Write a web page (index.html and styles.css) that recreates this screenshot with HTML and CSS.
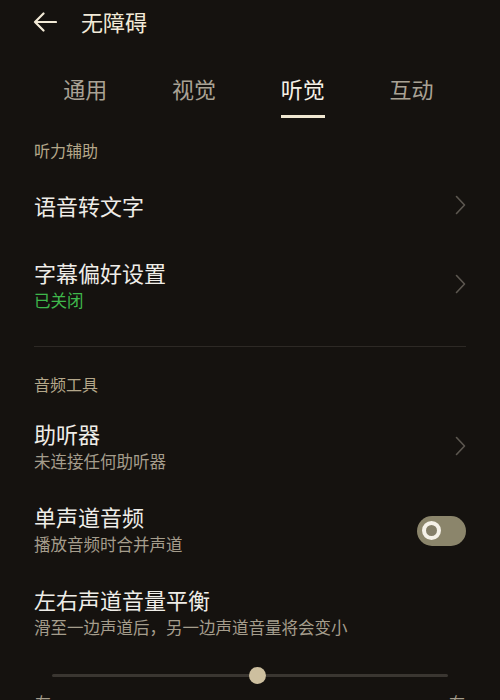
FILE: index.html
```html
<!DOCTYPE html>
<html lang="zh-CN">
<head>
<meta charset="utf-8">
<title>无障碍</title>
<link rel="stylesheet" href="styles.css">
</head>
<body>
<div class="screen">
  <header class="topbar">
    <svg class="back" width="24" height="20" viewBox="0 0 24 20">
      <path d="M23 10 H2 M10.5 1.5 L2 10 L10.5 18.5" fill="none" stroke="#f1e9d6" stroke-width="2.2" stroke-linecap="round" stroke-linejoin="round"/>
    </svg>
    <span class="page-title">无障碍</span>
  </header>

  <nav class="tabs">
    <div class="tab"><span class="tab-label">通用</span></div>
    <div class="tab"><span class="tab-label">视觉</span></div>
    <div class="tab active"><span class="tab-label">听觉</span></div>
    <div class="tab"><span class="tab-label">互动</span></div>
  </nav>

  <section class="group">
    <div class="group-title">听力辅助</div>
    <div class="row single">
      <div class="row-text"><div class="row-title">语音转文字</div></div>
      <svg class="chev" width="11" height="20" viewBox="0 0 11 20"><path d="M1.5 1.5 L9.5 10 L1.5 18.5" fill="none" stroke="#5c5750" stroke-width="1.6" stroke-linecap="round" stroke-linejoin="round"/></svg>
    </div>
    <div class="row">
      <div class="row-text">
        <div class="row-title">字幕偏好设置</div>
        <div class="row-sub green">已关闭</div>
      </div>
      <svg class="chev" width="11" height="20" viewBox="0 0 11 20"><path d="M1.5 1.5 L9.5 10 L1.5 18.5" fill="none" stroke="#5c5750" stroke-width="1.6" stroke-linecap="round" stroke-linejoin="round"/></svg>
    </div>
  </section>

  <div class="divider"></div>

  <section class="group">
    <div class="group-title">音频工具</div>
    <div class="row">
      <div class="row-text">
        <div class="row-title">助听器</div>
        <div class="row-sub">未连接任何助听器</div>
      </div>
      <svg class="chev" width="11" height="20" viewBox="0 0 11 20"><path d="M1.5 1.5 L9.5 10 L1.5 18.5" fill="none" stroke="#5c5750" stroke-width="1.6" stroke-linecap="round" stroke-linejoin="round"/></svg>
    </div>
    <div class="row">
      <div class="row-text">
        <div class="row-title">单声道音频</div>
        <div class="row-sub">播放音频时合并声道</div>
      </div>
      <div class="switch"><div class="knob"></div></div>
    </div>
    <div class="row">
      <div class="row-text">
        <div class="row-title">左右声道音量平衡</div>
        <div class="row-sub">滑至一边声道后，另一边声道音量将会变小</div>
      </div>
    </div>
    <div class="slider">
      <div class="track"></div>
      <div class="thumb" style="left: 52%;"></div>
    </div>
    <div class="slider-labels">
      <span>左</span>
      <span>右</span>
    </div>
  </section>
</div>
</body>
</html>
```

FILE: styles.css
```css
* { box-sizing: border-box; }

html, body {
  margin: 0;
  padding: 0;
  background: #15120f;
}

body {
  font-family: "Noto Sans CJK SC", "Noto Sans", sans-serif;
  color: #eeece6;
}

.screen {
  width: 500px;
  height: 700px;
  overflow: hidden;
  background: #15120f;
}

.topbar {
  height: 46px;
  display: flex;
  align-items: center;
  padding: 0 0 4px 33px;
}

.back {
  display: block;
  flex: none;
  margin-top: 2px;
}

.page-title {
  margin-left: 24px;
  font-size: 22px;
  line-height: 30px;
  color: #f2ead8;
}

.tabs {
  display: flex;
  margin-top: 27px;
  padding: 0 34px 0 31px;
}

.tab {
  flex: 1;
  display: flex;
  justify-content: center;
}

.tab-label {
  font-size: 22px;
  line-height: 30px;
  color: #a9a295;
  padding-bottom: 12px;
  border-bottom: 3px solid transparent;
}

.tab.active .tab-label {
  color: #f5f1e7;
  border-bottom-color: #efe6d0;
}

.group {
  padding: 0 34px;
}

.group-title {
  font-size: 16px;
  line-height: 22px;
  color: #b4a78a;
  margin-top: 21px;
  margin-bottom: 9.5px;
}

.row {
  display: flex;
  align-items: center;
  justify-content: space-between;
  padding: 14px 0;
}

.row.single {
  min-height: 72px;
  padding: 14px 0 18px;
}

.row-text {
  display: flex;
  flex-direction: column;
}

.row-title {
  font-size: 22px;
  line-height: 30px;
  color: #efede8;
}

.row-sub {
  margin-top: 1px;
  font-size: 16.5px;
  line-height: 24px;
  color: #a59d8c;
}

.row-sub.green {
  color: #3fb84c;
}

.chev {
  display: block;
  flex: none;
  margin-right: 0;
}

.divider {
  height: 1px;
  background: #2d2925;
  margin: 20px 34px 26px;
}

.switch {
  flex: none;
  width: 49px;
  height: 30px;
  border-radius: 15px;
  background: #8b856b;
  display: flex;
  align-items: center;
  padding-left: 5px;
  margin-top: 4px;
}

.knob {
  width: 19px;
  height: 19px;
  border-radius: 50%;
  border: 4.5px solid #f5f1e8;
  background: #857f69;
}

.slider {
  position: relative;
  height: 32px;
  margin: 6px 18px 0;
  display: flex;
  align-items: center;
}

.track {
  flex: 1;
  height: 3px;
  border-radius: 2px;
  background: #3a3631;
}

.thumb {
  position: absolute;
  top: 50%;
  width: 17px;
  height: 17px;
  margin: -8.5px 0 0 -8.5px;
  border-radius: 50%;
  background: #cdbf9f;
}

.slider-labels {
  display: flex;
  justify-content: space-between;
  font-size: 16px;
  line-height: 22px;
  color: #a59d8c;
  padding: 0 1px;
}
```
